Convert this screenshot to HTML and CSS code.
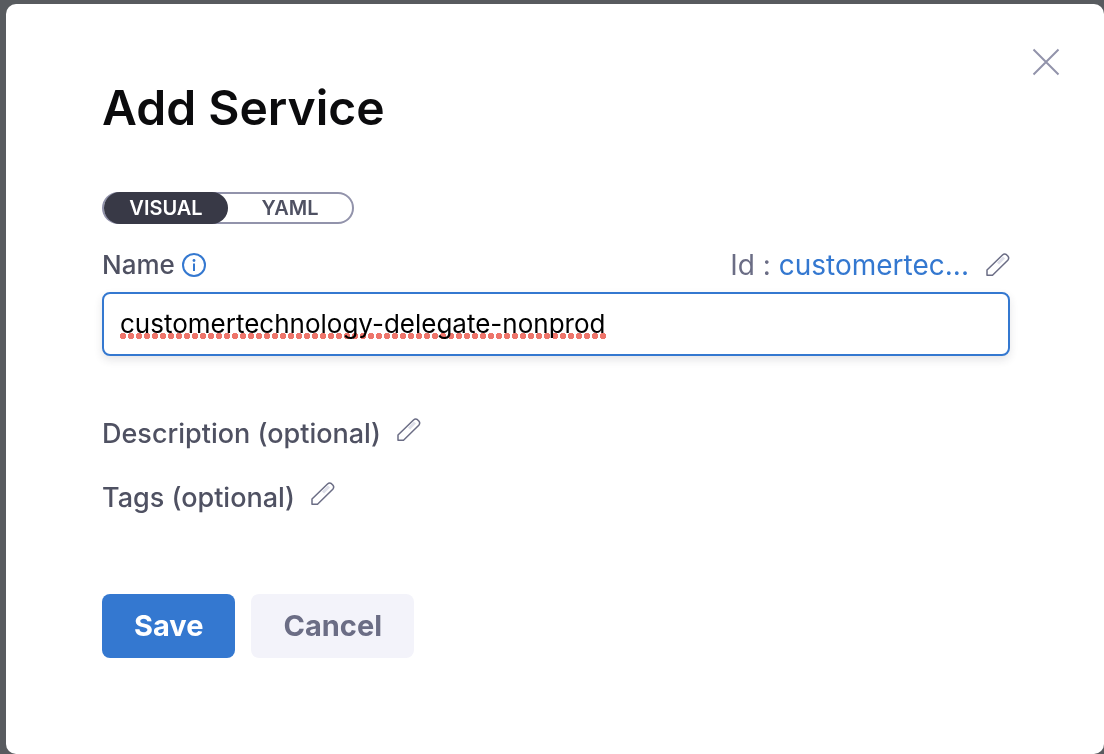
FILE: index.html
```html
<!DOCTYPE html>
<html lang="en">
<head>
<meta charset="utf-8">
<title>Add Service</title>
<link rel="stylesheet" href="styles.css">
</head>
<body>
<svg class="sprite" aria-hidden="true">
  <symbol id="pencil" viewBox="0 0 24 24">
    <path d="M12 10.500 18 4.500" fill="none" stroke="#dfe0ea" stroke-width="3"/>
    <path d="M1 17 16.500 2Q18.500 .2 20.500 1.700L22 3.200Q23.500 5.200 21.800 7.200L6.500 22.300H1Z" fill="none" stroke="currentColor" stroke-width="1.500" stroke-linejoin="round"/>
  </symbol>
</svg>
<main class="dialog">
  <button class="close" type="button" aria-label="Close">
    <svg class="close-icon" viewBox="0 0 28 28"><path d="M1.500 1.500l25 25M26.500 1.500l-25 25" fill="none" stroke="currentColor" stroke-width="2"/></svg>
  </button>
  <h1 class="title">Add Service</h1>
  <div class="toggle">
    <button class="toggle-option selected" type="button" aria-pressed="true">VISUAL</button>
    <button class="toggle-option" type="button" aria-pressed="false">YAML</button>
  </div>
  <form class="form">
    <div class="name-row">
      <label class="label" for="name">Name</label>
      <svg class="info" viewBox="0 0 24 24" aria-hidden="true"><circle cx="12" cy="12" r="11" fill="none" stroke="currentColor" stroke-width="2"/><circle cx="12" cy="7.500" r="1.400" fill="currentColor"/><path d="M12 10.500V18" stroke="currentColor" stroke-width="2"/></svg>
      <div class="identifier"><span class="id-label">Id :</span><span class="id-value">customertec...</span>
        <button class="edit" type="button" aria-label="Edit id"><svg class="pencil"><use href="#pencil"/></svg></button>
      </div>
    </div>
    <div class="field">
      <input class="input" id="name" type="text" value="customertechnology-delegate-nonprod" spellcheck="false">
      <span class="spelling"></span>
    </div>
    <div class="optional">
      <span class="label">Description (optional)</span>
      <button class="edit raised" type="button" aria-label="Edit description"><svg class="pencil"><use href="#pencil"/></svg></button>
    </div>
    <div class="optional">
      <span class="label">Tags (optional)</span>
      <button class="edit raised" type="button" aria-label="Edit tags"><svg class="pencil"><use href="#pencil"/></svg></button>
    </div>
    <div class="actions">
      <button class="button primary" type="button">Save</button>
      <button class="button secondary" type="button">Cancel</button>
    </div>
  </form>
</main>
</body>
</html>
```
FILE: styles.css
```css
* { box-sizing: border-box; }
body {
  margin: 0;
  padding: 4px 0 0 6px;
  min-height: 100vh;
  display: flex;
  background: #585b5f;
  font-family: Inter, "Liberation Sans", sans-serif;
  color: #4f5162;
}
button { font: inherit; cursor: pointer; border: 0; padding: 0; background: none; }
.sprite { position: absolute; width: 0; height: 0; }
.dialog {
  position: relative;
  flex: 1;
  background: #fff;
  border-radius: 10px;
  padding: 72px 94px 96px 96px;
}
.close { position: absolute; top: 44px; right: 44px; width: 28px; height: 28px; color: #9293ab; }
.close-icon { display: block; width: 28px; height: 28px; }
.title { margin: 0; font-size: 48px; line-height: 64px; font-weight: 600; color: #0b0b0d; }
.toggle {
  display: flex;
  width: 252px;
  height: 32px;
  margin-top: 52px;
  border-radius: 16px;
  box-shadow: inset 0 0 0 2px #9293ab;
  padding: 0 2px;
}
.toggle-option { flex: 1; border-radius: 16px; font-size: 20px; line-height: 32px; font-weight: 600; color: #4f5162; }
.toggle-option.selected { background: #383946; color: #fff; }
.name-row { display: flex; align-items: center; height: 36px; margin: 23px 0 9px; }
.label { font-size: 26px; line-height: 36px; font-weight: 500; }
.info { width: 24px; height: 24px; margin-left: 7px; color: #3478d0; }
.identifier { display: flex; align-items: center; margin-left: auto; font-size: 28px; line-height: 36px; }
.id-label { color: #6b6d85; margin-right: 8px; }
.id-value { color: #3478d0; margin-right: 17px; }
.edit { display: flex; color: #6b6d85; }
.pencil { display: block; width: 24px; height: 24px; }
.field { position: relative; }
.input {
  display: block;
  width: 100%;
  height: 64px;
  padding: 0 16px 2px;
  border: 2px solid #3478d0;
  border-radius: 8px;
  outline: 0;
  background: #fff;
  box-shadow: 0 4px 8px rgba(40, 41, 61, .12);
  font: 400 26px/36px Inter, "Liberation Sans", sans-serif;
  color: #000;
}
.spelling {
  position: absolute;
  left: 17px;
  top: 41px;
  width: 488px;
  height: 6px;
  background: radial-gradient(circle, #ee756b 2px, #ee756b 3px, transparent 3px) 0 0 / 8px 6px;
  mix-blend-mode: multiply;
  pointer-events: none;
}
.optional { display: flex; align-items: center; gap: 16px; height: 36px; margin-top: 28px; }
.optional .label { font-size: 27px; }
.field + .optional { margin-top: 60px; }
.raised { padding-bottom: 8px; }
.actions { display: flex; gap: 16px; margin-top: 78px; }
.button { height: 64px; padding: 0 32px; border-radius: 8px; font-size: 29px; line-height: 36px; font-weight: 700; }
.primary { background: #3478d0; color: #fff; }
.secondary { background: #f3f3fa; color: #6b6d85; }
```
